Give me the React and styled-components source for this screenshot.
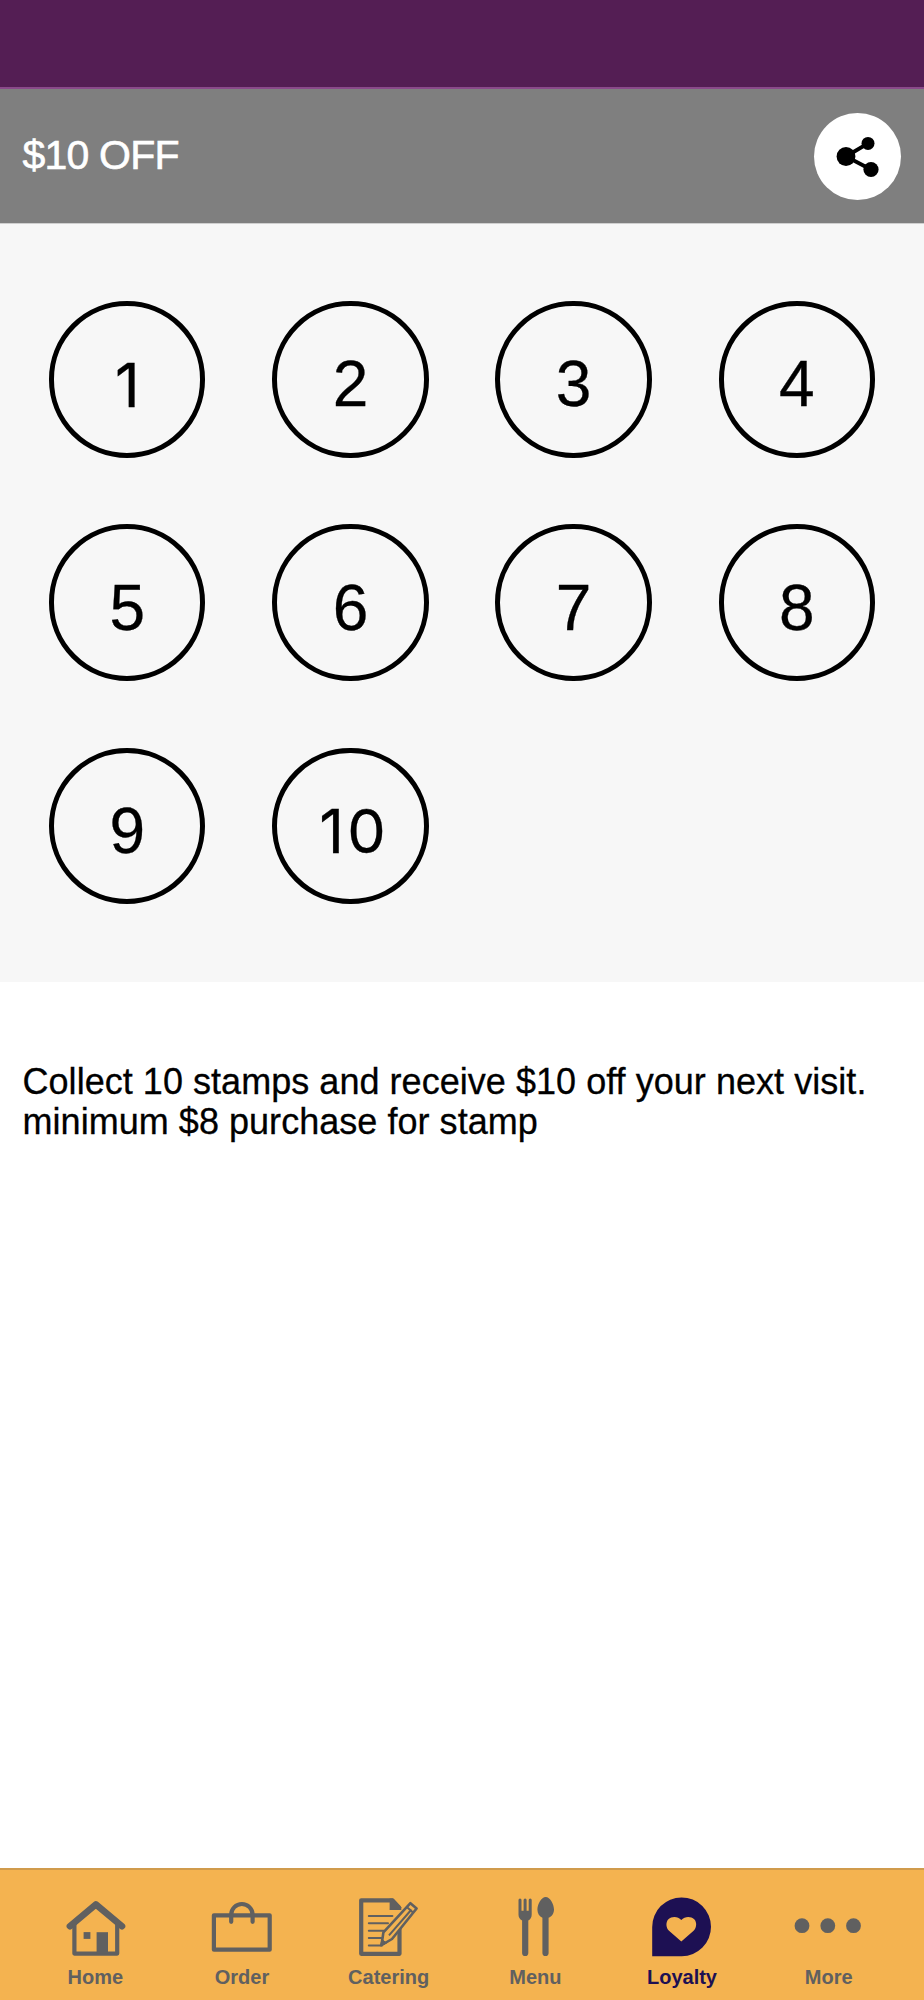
import React from 'react'
import styled, { createGlobalStyle } from 'styled-components'

const stamps = Array.from({ length: 10 }, (_, i) => i + 1)

const HomeIcon = () => (
  <svg width="72" height="64" viewBox="0 0 72 64" fill="none" stroke="currentColor">
    <path d="M10.9 32.2L36.8 10.4L63 32.2" strokeWidth="6.6" strokeLinecap="round" strokeLinejoin="round" />
    <path d="M15.4 30V59.6H58.2V30" strokeWidth="4.2" strokeLinejoin="round" />
    <rect x="24.6" y="38.1" width="6.8" height="6.8" fill="currentColor" stroke="none" />
    <rect x="37.6" y="38.2" width="11.4" height="21" fill="currentColor" stroke="none" />
  </svg>
)

const OrderIcon = () => (
  <svg width="72" height="64" viewBox="0 0 72 64" fill="none" stroke="currentColor" strokeWidth="4.2">
    <rect x="7.9" y="21.3" width="55.8" height="34.4" strokeLinejoin="round" />
    <path d="M25.2 27.8V20.7A10.7 10.7 0 0 1 46.6 20.7V27.8" strokeLinecap="round" />
  </svg>
)

const CateringIcon = () => (
  <svg width="72" height="64" viewBox="0 0 72 64" fill="none" stroke="currentColor">
    <path d="M46.5 27V59.8H8.2V6.3H39.5L46.5 14" strokeWidth="4.2" strokeLinejoin="round" />
    <path d="M36.6 4.5H40L48.3 13.3V16H36.6Z" fill="currentColor" stroke="none" />
    <path d="M15.8 22H39.4M15.8 29.3H35M15.8 36.7H31M15.8 43.9H28.5M15.8 51.5H29" strokeWidth="2" strokeLinecap="round" />
    <path d="M28.5 51.2L30.4 38.4L57.4 9.2L63.6 14.5L39 45Z" fill="#f4b350" strokeWidth="2.6" strokeLinejoin="round" />
    <path d="M27.3 52L29 45.5L33.5 49Z" fill="currentColor" />
    <path d="M36 41.3L58.5 15.5M53.5 12.8L60 18.5" strokeWidth="2" />
  </svg>
)

const MenuIcon = () => (
  <svg width="72" height="64" viewBox="0 0 72 64" fill="currentColor">
    <path d="M19.5 6a1.5 1.5 0 0 1 3 0V16.7H24.6V6a1.5 1.5 0 0 1 3 0V16.7H29.7V6a1.5 1.5 0 0 1 3 0V20.5Q32.7 24.5 29.3 26.5V59a3.1 3.1 0 0 1-6.2 0V26.5Q19.5 24.5 19.5 20.5Z" />
    <path d="M46.7 3C51 3 55 10 55 15.5C55 19.5 52.8 22.5 49.6 23.7V59a3.1 3.1 0 0 1-6.2 0V23.7C40.4 22.5 38.4 19.5 38.4 15.5C38.4 10 42.4 3 46.7 3Z" />
  </svg>
)

const LoyaltyIcon = () => (
  <svg width="72" height="64" viewBox="0 0 72 64">
    <path d="M6.2 62.2V32.9A29.4 29.4 0 1 1 35.7 62.2Z" fill="currentColor" />
    <path d="M35.3 47.4L23 36.8C19.6 33.4 19.8 27.8 22.4 25.2C26 21.8 32 22.2 35.3 26C38.6 22.2 44.7 21.8 48.2 25.2C50.9 27.8 51 33.4 47.6 36.8Z" fill="#f4b350" />
  </svg>
)

const MoreIcon = () => (
  <svg width="72" height="64" viewBox="0 0 72 64" fill="currentColor">
    <circle cx="9" cy="31.7" r="7.4" />
    <circle cx="34.8" cy="31.7" r="7.4" />
    <circle cx="60.5" cy="31.7" r="7.4" />
  </svg>
)

const ShareIcon = () => (
  <svg width="87" height="87" viewBox="0 0 87 87">
    <path d="M54 30.4L32 43.5L57 56.5" fill="none" stroke="#000" strokeWidth="4" />
    <circle cx="32" cy="43.5" r="9.4" />
    <circle cx="54" cy="30.4" r="6.5" />
    <circle cx="57" cy="56.5" r="7.6" />
  </svg>
)

const tabs = [
  { name: 'Home', Icon: HomeIcon },
  { name: 'Order', Icon: OrderIcon },
  { name: 'Catering', Icon: CateringIcon },
  { name: 'Menu', Icon: MenuIcon },
  { name: 'Loyalty', Icon: LoyaltyIcon },
  { name: 'More', Icon: MoreIcon },
]

export default function App() {
  return (
    <>
      <GlobalStyle />
      <Screen>
        <StatusBar />
        <Header>
          <Title>$10 OFF</Title>
          <ShareButton aria-label="Share">
            <ShareIcon />
          </ShareButton>
        </Header>
        <StampCard>
          {stamps.map((n) => (
            <Stamp key={n} $plainOne={n === 1 || n === 10} $wide={n > 9}>{n}</Stamp>
          ))}
        </StampCard>
        <Description>
          <p>Collect 10 stamps and receive $10 off your next visit.</p>
          <p>minimum $8 purchase for stamp</p>
        </Description>
        <TabBar>
          {tabs.map(({ name, Icon }) => (
            <Tab key={name} $active={name === 'Loyalty'}>
              <Icon />
              <span>{name}</span>
            </Tab>
          ))}
        </TabBar>
      </Screen>
    </>
  )
}

const GlobalStyle = createGlobalStyle`
    * {
        box-sizing: border-box;
    }
    body {
        margin: 0;
        background: #fff;
        font-family: "Liberation Sans", Arial, sans-serif;
    }
`;

const Screen = styled.div`
    display: flex;
    flex-direction: column;
    width: 924px;
    height: 2000px;
    background: #fff;
`;

const StatusBar = styled.div`
    height: 89px;
    flex-shrink: 0;
    background: #541e54;
    border-bottom: 2px solid #8a4a8a;
`;

const Header = styled.header`
    display: flex;
    align-items: center;
    justify-content: space-between;
    height: 135px;
    flex-shrink: 0;
    padding: 0 23.5px 0 22.5px;
    background: #7f7f7f;
    border-bottom: 1px solid #cfcfcf;
`;

const Title = styled.h1`
    margin: 0;
    padding-bottom: 2px;
    color: #fff;
    font-size: 41px;
    font-weight: 400;
    letter-spacing: -0.8px;
    -webkit-text-stroke: 0.6px #fff;
`;

const ShareButton = styled.button`
    display: flex;
    width: 87px;
    height: 87px;
    padding: 0;
    border: none;
    border-radius: 50%;
    background: #fff;
`;

const StampCard = styled.section`
    display: grid;
    grid-template-columns: repeat(4, 156.4px);
    grid-auto-rows: 156.4px;
    gap: 66.8px;
    height: 758px;
    flex-shrink: 0;
    padding: 77.3px 49.1px 0;
    background: #f7f7f7;
`;

const Stamp = styled.div`
    display: flex;
    align-items: center;
    justify-content: center;
    padding-top: ${({ $plainOne }) => ($plainOne ? '11px' : '10px')};
    border: 5px solid #000;
    border-radius: 50%;
    font-family: ${({ $plainOne }) => ($plainOne ? 'Inter, sans-serif' : 'inherit')};
    font-size: ${({ $plainOne }) => ($plainOne ? '61px' : '64px')};
    letter-spacing: ${({ $wide }) => ($wide ? '3px' : '0')};
    text-indent: ${({ $wide }) => ($wide ? '7px' : '0')};
    -webkit-text-stroke: 0.3px #000;
`;

const Description = styled.div`
    flex: 1;
    padding: 80px 22.5px 0;
    font-size: 36px;
    line-height: 40.3px;
    letter-spacing: 0.04px;
    white-space: nowrap;
    -webkit-text-stroke: 0.3px #000;

    p {
        margin: 0;
    }
`;

const TabBar = styled.nav`
    display: grid;
    grid-template-columns: repeat(6, 1fr);
    height: 132px;
    flex-shrink: 0;
    padding: 24px 22px 0;
    background: #f4b350;
    border-top: 2px solid #d09b4c;
`;

const Tab = styled.a`
    display: flex;
    flex-direction: column;
    align-items: center;
    gap: 7px;
    color: ${({ $active }) => ($active ? '#1d1053' : '#606060')};
    font-size: 20px;
    font-weight: 700;
    line-height: 24px;
`;
